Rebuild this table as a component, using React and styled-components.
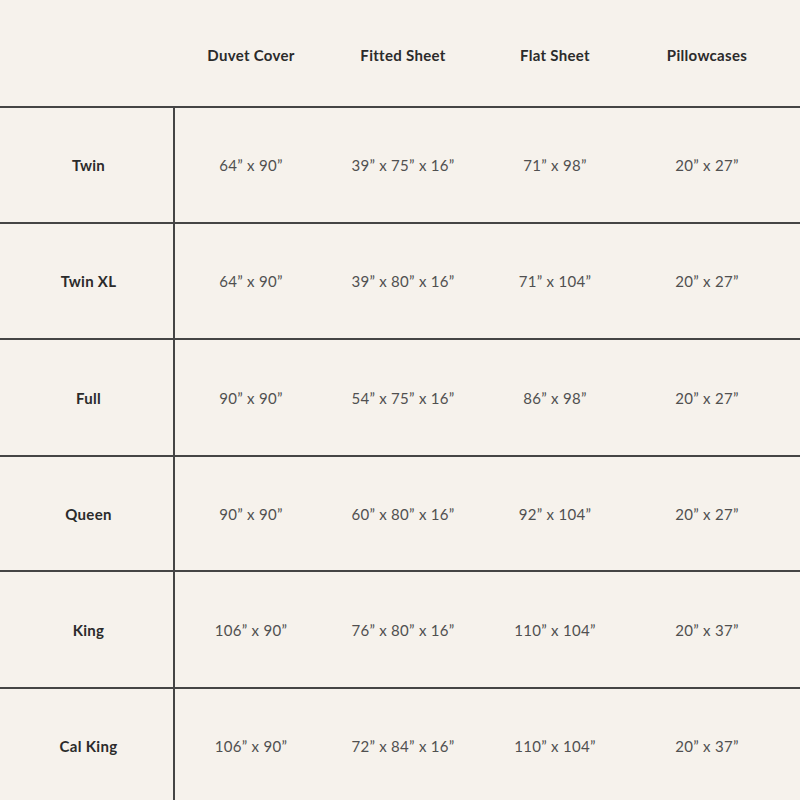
import styled, {createGlobalStyle} from "styled-components";

const GlobalStyle = createGlobalStyle`
    body {
        margin: 0;
        background: #f6f2ec;
        font-family: Lato, "Open Sans", sans-serif;
    }
`;

const Page = styled.div`
    width: 800px;
    height: 800px;
    overflow: hidden;
    background: #f6f2ec;
    color: #2f2f2f;
`;

const Row = styled.div`
    display: grid;
    grid-template-columns: 175px repeat(4, 152px) 1fr;
    height: ${(props) => props.$height}px;
    padding-top: ${(props) => props.$nudge || 0}px;
    border-top: ${(props) => (props.$ruled ? "2px solid #454545" : "none")};
    box-sizing: border-box;
`;

const Cell = styled.div`
    display: flex;
    align-items: center;
    justify-content: center;
    font-size: 15px;
    letter-spacing: 0.3px;
    font-weight: ${(props) => (props.$bold ? 700 : 400)};
    color: ${(props) => (props.$bold ? "#2b2b2b" : "#505050")};
`;

const LabelCell = styled(Cell)`
    padding-left: 4px;
    border-right: ${(props) => (props.$ruled ? "2px solid #454545" : "none")};
`;

const headers = ["Duvet Cover", "Fitted Sheet", "Flat Sheet", "Pillowcases"];

const sizes = [
    {name: "Twin", values: ["64” x 90”", "39” x 75” x 16”", "71” x 98”", "20” x 27”"], h: 116},
    {name: "Twin XL", values: ["64” x 90”", "39” x 80” x 16”", "71” x 104”", "20” x 27”"], h: 116},
    {name: "Full", values: ["90” x 90”", "54” x 75” x 16”", "86” x 98”", "20” x 27”"], h: 117},
    {name: "Queen", values: ["90” x 90”", "60” x 80” x 16”", "92” x 104”", "20” x 27”"], h: 115},
    {name: "King", values: ["106” x 90”", "76” x 80” x 16”", "110” x 104”", "20” x 37”"], h: 117},
    {name: "Cal King", values: ["106” x 90”", "72” x 84” x 16”", "110” x 104”", "20” x 37”"], h: 116},
];

const App = () => {
    return (
        <Page>
            <GlobalStyle />
            <Row $height={106} $nudge={4}>
                <LabelCell />
                {headers.map((h) => (
                    <Cell key={h} $bold>
                        {h}
                    </Cell>
                ))}
                <Cell />
            </Row>
            {sizes.map((s) => (
                <Row key={s.name} $height={s.h} $ruled>
                    <LabelCell $bold $ruled>
                        {s.name}
                    </LabelCell>
                    {s.values.map((v, i) => (
                        <Cell key={i}>{v}</Cell>
                    ))}
                    <Cell />
                </Row>
            ))}
        </Page>
    );
};

export default App;
